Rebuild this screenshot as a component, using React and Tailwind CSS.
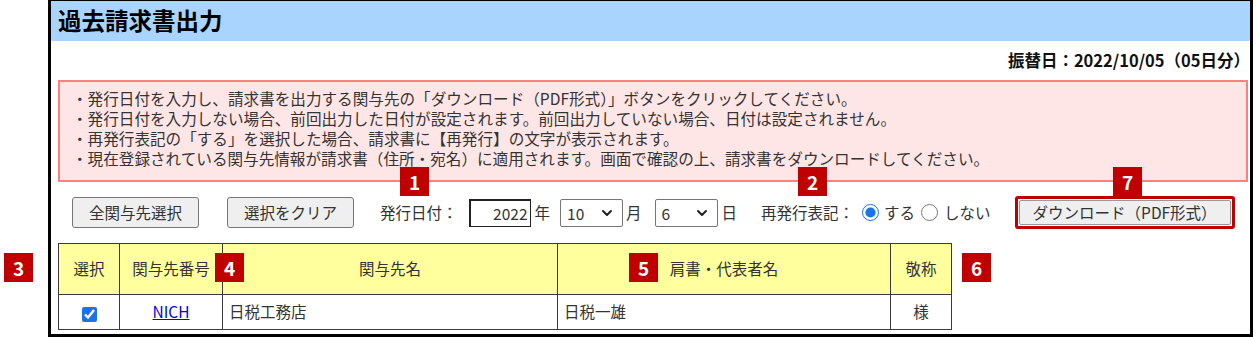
import React, { useState } from 'react'
import { ChevronDown } from 'lucide-react'

const font = { fontFamily: '"Noto Sans CJK JP", "Noto Sans", sans-serif' }

const notes = [
  '・発行日付を入力し、請求書を出力する関与先の「ダウンロード（PDF形式）」ボタンをクリックしてください。',
  '・発行日付を入力しない場合、前回出力した日付が設定されます。前回出力していない場合、日付は設定されません。',
  '・再発行表記の「する」を選択した場合、請求書に【再発行】の文字が表示されます。',
  '・現在登録されている関与先情報が請求書（住所・宛名）に適用されます。画面で確認の上、請求書をダウンロードしてください。',
]

const Badge = ({ n, className }) => (
  <div
    className={`absolute w-[29px] h-[29px] bg-[#c00000] text-white font-bold text-[19px] leading-[29px] text-center ${className}`}
  >
    {n}
  </div>
)

const Select = ({ value, options, onChange }) => (
  <div className="relative w-[63px] h-[28px]">
    <select
      value={value}
      onChange={(e) => onChange(e.target.value)}
      className="appearance-none w-full h-full border border-[#767676] rounded-[2px] bg-white pl-[6px] text-[15.5px] leading-[26px]"
    >
      {options.map((o) => (
        <option key={o} value={o}>
          {o}
        </option>
      ))}
    </select>
    <ChevronDown
      size={16}
      strokeWidth={3}
      className="absolute right-[8px] top-[6px] pointer-events-none text-[#222]"
    />
  </div>
)

const App = () => {
  const [month, setMonth] = useState('10')
  const [day, setDay] = useState('6')
  const [reissue, setReissue] = useState('yes')
  const [checked, setChecked] = useState(true)

  return (
    <div className="relative w-[1256px] h-[337px] bg-white pl-[48px] pr-[3px] text-[#222]" style={font}>
      <div className="h-[337px] border-[3px] border-t-[1px] border-black flex flex-col">
        {/* Title bar */}
        <div className="h-[40px] bg-[#a8d4fe] pl-[7px] flex items-center">
          <h1 className="text-[23.5px] font-bold text-black leading-none">過去請求書出力</h1>
        </div>

        {/* Transfer date */}
        <div className="h-[39px] flex items-center justify-end">
          <span className="text-[16.5px] font-bold text-[#111]">振替日：2022/10/05（05日分）</span>
        </div>

        {/* Notice box */}
        <div className="ml-[7px] mr-[2px] h-[102px] border-2 border-[#ff8080] bg-[#ffe6e6] pl-[12px] pt-[6px] text-[15.6px] leading-[20px] text-[#333]">
          {notes.map((t) => (
            <p key={t}>{t}</p>
          ))}
        </div>

        {/* Controls */}
        <div className="h-[47px] flex items-center pl-[21px] pt-[14px] text-[15.5px] text-[#333]">
          <button className="w-[127px] h-[31px] bg-[#efefef] border border-[#767676] rounded-[3px]">
            全関与先選択
          </button>
          <button className="ml-[28px] w-[127px] h-[31px] bg-[#efefef] border border-[#767676] rounded-[3px]">
            選択をクリア
          </button>
          <span className="ml-[26px]">発行日付：</span>
          <input
            defaultValue="2022"
            className="ml-[11px] w-[62px] h-[28px] border border-[#222] border-t-2 border-l-2 text-right pr-[2px] bg-white"
          />
          <span className="ml-[4px]">年</span>
          <div className="ml-[10px]">
            <Select value={month} onChange={setMonth} options={['1', '2', '3', '4', '5', '6', '7', '8', '9', '10', '11', '12']} />
          </div>
          <span className="ml-[3px]">月</span>
          <div className="ml-[13px]">
            <Select value={day} onChange={setDay} options={['1', '2', '3', '4', '5', '6', '7', '8', '9', '10']} />
          </div>
          <span className="ml-[4px]">日</span>
          <span className="ml-[24px]">再発行表記：</span>
          <label className="flex items-center ml-[8px]">
            <input
              type="radio"
              name="reissue"
              checked={reissue === 'yes'}
              onChange={() => setReissue('yes')}
              className="w-[17px] h-[17px] m-0 accent-[#1a73e8]"
            />
            <span className="ml-[5px]">する</span>
          </label>
          <label className="flex items-center ml-[6px]">
            <input
              type="radio"
              name="reissue"
              checked={reissue === 'no'}
              onChange={() => setReissue('no')}
              className="w-[17px] h-[17px] m-0 accent-[#1a73e8]"
            />
            <span className="ml-[6px]">しない</span>
          </label>
          <div className="ml-[24px] w-[220px] h-[33px] border-[3px] border-[#c00000] rounded-[3px] p-[1px]">
            <button className="w-full h-full bg-[#efefef] border border-[#999] rounded-[2px] text-[15.5px] leading-none">
              ダウンロード（PDF形式）
            </button>
          </div>
        </div>

        {/* Table */}
        <div className="ml-[7px] mt-[14px]">
          <table className="border-collapse text-[15.5px] text-[#333]">
            <thead>
              <tr className="h-[51px] bg-[#ffff9e]">
                <th className="w-[61px] border border-[#3a3a3a] font-normal">選択</th>
                <th className="w-[103px] border border-[#3a3a3a] font-normal">関与先番号</th>
                <th className="w-[335px] border border-[#3a3a3a] font-normal">関与先名</th>
                <th className="w-[333px] border border-[#3a3a3a] font-normal">肩書・代表者名</th>
                <th className="w-[61px] border border-[#3a3a3a] font-normal">敬称</th>
              </tr>
            </thead>
            <tbody>
              <tr className="h-[35px]">
                <td className="border border-[#3a3a3a] text-center">
                  <input
                    type="checkbox"
                    checked={checked}
                    onChange={(e) => setChecked(e.target.checked)}
                    className="w-[15px] h-[15px] align-middle accent-[#1a73e8]"
                  />
                </td>
                <td className="border border-[#3a3a3a] text-center">
                  <a href="#" className="text-[#0000ee] underline">NICH</a>
                </td>
                <td className="border border-[#3a3a3a] pl-[6px]">日税工務店</td>
                <td className="border border-[#3a3a3a] pl-[6px]">日税一雄</td>
                <td className="border border-[#3a3a3a] text-center">様</td>
              </tr>
            </tbody>
          </table>
        </div>
      </div>

      {/* Annotation badges */}
      <Badge n="1" className="left-[400px] top-[167px]" />
      <Badge n="2" className="left-[798px] top-[167px]" />
      <Badge n="7" className="left-[1113px] top-[167px]" />
      <Badge n="3" className="left-[4px] top-[253px]" />
      <Badge n="4" className="left-[215px] top-[253px]" />
      <Badge n="5" className="left-[629px] top-[253px]" />
      <Badge n="6" className="left-[962px] top-[253px]" />
    </div>
  )
}

export default App
